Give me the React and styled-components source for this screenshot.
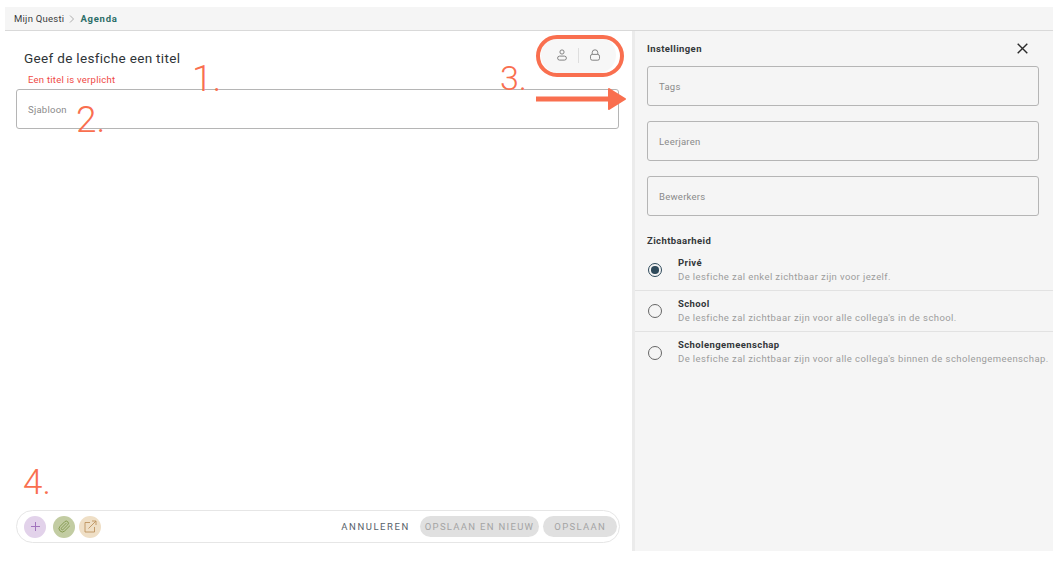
import React from 'react';
import styled, { createGlobalStyle } from 'styled-components';

const GlobalStyle = createGlobalStyle`
  html, body { margin: 0; padding: 0; background: #fff; }
  body { font-family: "Roboto", "Liberation Sans", sans-serif; color: #2f3437; }
  * { box-sizing: border-box; }
`;

const Page = styled.div`
  position: relative;
  width: 1061px;
  height: 571px;
  padding: 7px 8px 20px 5px;
  overflow: hidden;
`;

const Frame = styled.div`
  height: 100%;
  display: flex;
  flex-direction: column;
`;

const TopBar = styled.div`
  height: 24px;
  flex: none;
  display: flex;
  align-items: center;
  gap: 5px;
  padding-left: 9px;
  background: #f5f5f5;
  border-bottom: 1px solid #d9d9d9;
  font-size: 9.5px;
  letter-spacing: 0.25px;
`;

const Crumb = styled.span`
  color: ${p => (p.$active ? '#2c6e68' : '#3a3d40')};
  font-weight: ${p => (p.$active ? 700 : 400)};
  letter-spacing: ${p => (p.$active ? '0.75px' : '0.25px')};
`;

const Body = styled.div`
  flex: 1;
  display: flex;
  min-height: 0;
`;

const Main = styled.main`
  width: 627px;
  flex: none;
  display: flex;
  flex-direction: column;
  padding: 0 13px 8px 11px;
  background: #fff;
`;

const HeaderRow = styled.div`
  display: flex;
  justify-content: space-between;
  align-items: center;
  height: 38px;
  margin-top: 5px;
`;

const Title = styled.h1`
  margin: 6px 0 0 8px;
  font-size: 13.5px;
  font-weight: 400;
  letter-spacing: 0.33px;
  color: #2f3437;
`;

const IconPill = styled.div`
  display: flex;
  align-items: center;
  gap: 10px;
  width: 75px;
  height: 36px;
  margin-right: 3px;
  padding-left: 15px;
  border-radius: 18px;
  background: #f7f7f7;
  color: #777;
`;

const Sep = styled.span`
  width: 1px;
  height: 15px;
  background: #dedede;
`;

const ErrorText = styled.div`
  margin: 0 0 4px 12px;
  font-size: 9.5px;
  line-height: 11px;
  letter-spacing: 0.25px;
  color: #ef4a46;
`;

const Field = styled.div`
  height: 40px;
  flex: none;
  display: flex;
  align-items: center;
  padding-left: 11px;
  border: 1px solid #b5b5b5;
  border-radius: 3px;
  background: ${p => (p.$muted ? '#f5f5f5' : '#fff')};
  font-size: 9.5px;
  letter-spacing: 0.25px;
  color: #8a8a8a;
`;

const Footer = styled.div`
  margin-top: auto;
  margin-right: -1px;
  height: 33px;
  display: flex;
  align-items: center;
  gap: 4px;
  padding: 0 2px 0 7px;
  border: 1px solid #e6e6e6;
  border-radius: 17px;
`;

const RoundButton = styled.span`
  width: 22px;
  height: 22px;
  margin-right: ${p => p.$gap || 0}px;
  display: flex;
  align-items: center;
  justify-content: center;
  border-radius: 50%;
  background: ${p => p.$bg};
  color: ${p => p.$fg};
`;

const Cancel = styled.span`
  margin-left: auto;
  margin-right: 6px;
  font-size: 9.5px;
  letter-spacing: 1.55px;
  color: #56626a;
`;

const SaveButton = styled.span`
  height: 21px;
  display: flex;
  align-items: center;
  padding: 0 ${p => p.$pad}px;
  border-radius: 11px;
  background: #e0e0e0;
  font-size: 9.5px;
  letter-spacing: 1.3px;
  color: #a4a4a4;
`;

const Divider = styled.div`
  width: 3px;
  flex: none;
  background: #ebebeb;
`;

const Side = styled.aside`
  flex: 1;
  min-width: 0;
  background: #f5f5f5;
`;

const SideHead = styled.div`
  height: 35px;
  display: flex;
  align-items: center;
  justify-content: space-between;
  padding: 0 25px 0 12px;
`;

const SectionTitle = styled.div`
  font-size: 9.5px;
  font-weight: 700;
  letter-spacing: 0.4px;
  color: #33373a;
`;

const Fields = styled.div`
  display: flex;
  flex-direction: column;
  gap: 15px;
  padding: 0 14px 0 12px;
`;

const Visibility = styled(SectionTitle)`
  margin: 19px 0 3px 12px;
  line-height: 12px;
`;

const Option = styled.div`
  height: 41px;
  display: flex;
  align-items: center;
  gap: 16px;
  padding: 0 0 0 13px;
  border-bottom: ${p => (p.$last ? 'none' : '1px solid #e2e2e2')};
`;

const Radio = styled.span`
  width: 14px;
  height: 14px;
  flex: none;
  display: flex;
  align-items: center;
  justify-content: center;
  border: 1.3px solid ${p => (p.$checked ? '#2f4a5b' : '#666')};
  border-radius: 50%;
  &::after {
    content: '';
    display: ${p => (p.$checked ? 'block' : 'none')};
    width: 7.5px;
    height: 7.5px;
    border-radius: 50%;
    background: #2f4a5b;
  }
`;

const OptionText = styled.div`
  white-space: nowrap;
  margin-top: -1px;
`;

const OptionName = styled.div`
  font-size: 9.5px;
  line-height: 14px;
  font-weight: 700;
  letter-spacing: 0.4px;
  color: #33373a;
`;

const OptionDesc = styled.div`
  font-size: 9.5px;
  line-height: 14px;
  letter-spacing: 0.41px;
  color: #9c9c9c;
`;

const CloseButton = styled.svg`
  display: block;
  color: #2b2b2b;
`;

/* review notes drawn on top of the screenshot */
const Note = styled.span`
  position: absolute;
  left: ${p => p.$x}px;
  top: ${p => p.$y}px;
  font-size: ${p => p.$size}px;
  line-height: 40px;
  font-weight: 300;
  color: #f96f4f;
`;

const Ring = styled.div`
  position: absolute;
  left: 536px;
  top: 35px;
  width: 88px;
  height: 42px;
  border: 4px solid #f96f4f;
  border-radius: 21px;
`;

const ArrowMark = styled.svg`
  position: absolute;
  left: 535px;
  top: 86px;
`;

const options = [
  { name: 'Privé', desc: 'De lesfiche zal enkel zichtbaar zijn voor jezelf.', checked: true },
  { name: 'School', desc: "De lesfiche zal zichtbaar zijn voor alle collega's in de school." },
  { name: 'Scholengemeenschap', desc: "De lesfiche zal zichtbaar zijn voor alle collega's binnen de scholengemeenschap.", last: true },
];

const App = () => {
  return (
    <Page>
      <GlobalStyle />
      <Frame>
        <TopBar>
          <Crumb>Mijn Questi</Crumb>
          <svg width="6" height="8" viewBox="0 0 6 8" fill="none" stroke="#999" strokeWidth="0.8">
            <path d="M1 0.5 L4.5 4 L1 7.5" />
          </svg>
          <Crumb $active>Agenda</Crumb>
        </TopBar>
        <Body>
          <Main>
            <HeaderRow>
              <Title>Geef de lesfiche een titel</Title>
              <IconPill>
                <svg width="12" height="12" viewBox="0 0 12 12" fill="none" stroke="currentColor" strokeWidth="0.9">
                  <circle cx="6" cy="3" r="2.1" />
                  <rect x="1.6" y="7.1" width="8.8" height="4" rx="2" />
                </svg>
                <Sep />
                <svg width="12" height="12" viewBox="0 0 12 12" fill="none" stroke="currentColor" strokeWidth="0.9">
                  <path d="M3.2 5.4 V3.6 a2.8 2.8 0 0 1 5.6 0 V5.4" />
                  <rect x="1.5" y="5.4" width="9" height="5.8" rx="1.8" />
                </svg>
              </IconPill>
            </HeaderRow>
            <ErrorText>Een titel is verplicht</ErrorText>
            <Field>Sjabloon</Field>
            <Footer>
              <RoundButton $bg="#e2d2ea" $fg="#a274bd" $gap={3}>
                <svg width="11" height="11" viewBox="0 0 11 11" stroke="currentColor" strokeWidth="1">
                  <path d="M5.5 1 V10 M1 5.5 H10" />
                </svg>
              </RoundButton>
              <RoundButton $bg="#c2cca2" $fg="#84994f">
                <svg width="13" height="13" viewBox="0 0 24 24" fill="none" stroke="currentColor" strokeWidth="1.8" strokeLinecap="round" strokeLinejoin="round">
                  <path d="m21.44 11.05-9.19 9.19a6 6 0 0 1-8.49-8.49l8.57-8.57A4 4 0 1 1 18 8.84l-8.59 8.57a2 2 0 0 1-2.83-2.83l8.49-8.48" />
                </svg>
              </RoundButton>
              <RoundButton $bg="#efdfc6" $fg="#bd935f">
                <svg width="13" height="13" viewBox="0 0 13 13" fill="none" stroke="currentColor" strokeWidth="0.9">
                  <path d="M6 2.5 H1 V12 H10.5 V7" />
                  <path d="M4.5 8.5 L12 1 M8 1 H12 V5" />
                </svg>
              </RoundButton>
              <Cancel>ANNULEREN</Cancel>
              <SaveButton $pad={5}>OPSLAAN EN NIEUW</SaveButton>
              <SaveButton $pad={11}>OPSLAAN</SaveButton>
            </Footer>
          </Main>
          <Divider />
          <Side>
            <SideHead>
              <SectionTitle>Instellingen</SectionTitle>
              <CloseButton width="11" height="11" viewBox="0 0 11 11" stroke="currentColor" strokeWidth="1.4">
                <path d="M0.7 0.7 L10.3 10.3 M10.3 0.7 L0.7 10.3" />
              </CloseButton>
            </SideHead>
            <Fields>
              <Field $muted>Tags</Field>
              <Field $muted>Leerjaren</Field>
              <Field $muted>Bewerkers</Field>
            </Fields>
            <Visibility>Zichtbaarheid</Visibility>
            {options.map(o => (
              <Option key={o.name} $last={o.last}>
                <Radio $checked={o.checked} />
                <OptionText>
                  <OptionName>{o.name}</OptionName>
                  <OptionDesc>{o.desc}</OptionDesc>
                </OptionText>
              </Option>
            ))}
          </Side>
        </Body>
      </Frame>

      <Note $x={192} $y={59} $size={37}>1.</Note>
      <Note $x={76} $y={100} $size={37}>2.</Note>
      <Note $x={500} $y={58} $size={34}>3.</Note>
      <Note $x={23} $y={463} $size={35}>4.</Note>
      <Ring />
      <ArrowMark width="92" height="26" viewBox="0 0 92 26">
        <path d="M1 13 H76" stroke="#f96f4f" strokeWidth="5" />
        <path d="M74 3 L90 13 L74 23 Z" fill="#f96f4f" stroke="#f96f4f" strokeWidth="2" strokeLinejoin="round" />
      </ArrowMark>
    </Page>
  );
};

export default App;
